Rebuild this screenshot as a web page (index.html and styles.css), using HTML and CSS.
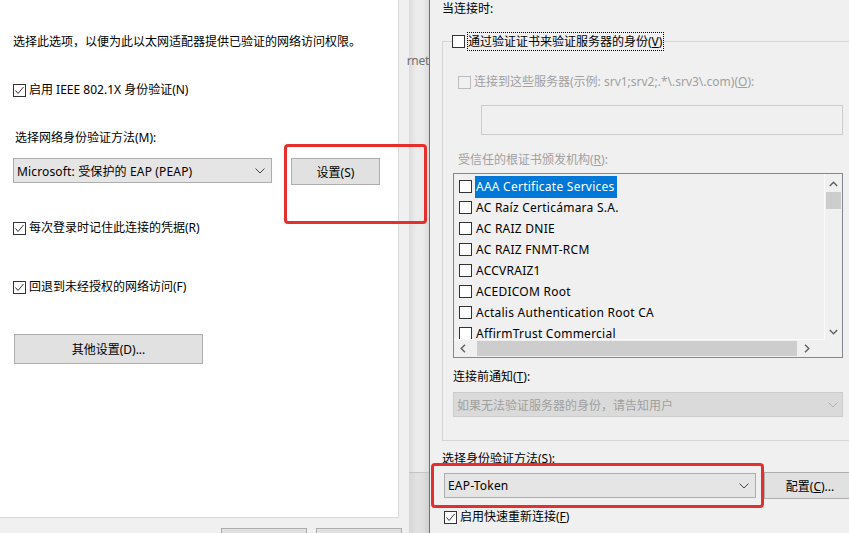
FILE: index.html
```html
<!DOCTYPE html>
<html lang="zh-CN">
<head>
<meta charset="utf-8">
<title>EAP</title>
<link rel="stylesheet" href="styles.css">
</head>
<body>
<div class="screen">
  <div class="left">
    <div class="sheet">
      <p class="intro">选择此选项，以便为此以太网适配器提供已验证的网络访问权限。</p>
      <div class="check-row r-ieee">
        <span class="cb checked"><svg viewBox="0 0 13 13" width="13" height="13"><path d="M2.5 6.5 L5 9.5 L10.5 3" fill="none" stroke="#333" stroke-width="1"/></svg></span>
        <span>启用 IEEE 802.1X 身份验证(N)</span>
      </div>
      <div class="label l-method">选择网络身份验证方法(M):</div>
      <div class="method-row">
        <div class="select sel-peap"><span>Microsoft: 受保护的 EAP (PEAP)</span>
          <svg class="chev" viewBox="0 0 10 6" width="10" height="6"><path d="M0.5 0.5 L5 5 L9.5 0.5" fill="none" stroke="#444" stroke-width="1"/></svg></div>
        <button class="btn btn-settings">设置(S)</button>
      </div>
      <div class="check-row r-remember">
        <span class="cb checked"><svg viewBox="0 0 13 13" width="13" height="13"><path d="M2.5 6.5 L5 9.5 L10.5 3" fill="none" stroke="#333" stroke-width="1"/></svg></span>
        <span>每次登录时记住此连接的凭据(R)</span>
      </div>
      <div class="check-row r-fallback">
        <span class="cb checked"><svg viewBox="0 0 13 13" width="13" height="13"><path d="M2.5 6.5 L5 9.5 L10.5 3" fill="none" stroke="#333" stroke-width="1"/></svg></span>
        <span>回退到未经授权的网络访问(F)</span>
      </div>
      <button class="btn btn-other">其他设置(D)...</button>
    </div>
    <div class="footer">
      <button class="btn btn-foot"></button>
      <button class="btn btn-foot"></button>
    </div>
  </div>

  <div class="strip">
    <div class="strip-top"><span class="tab-text">rnet</span></div>
    <div class="strip-bottom"></div>
  </div>
  <div class="divider"></div>

  <div class="right">
    <div class="heading">当连接时:</div>
    <fieldset class="group">
      <legend class="legend">
        <span class="cb"></span>
        <span class="focus-label">通过验证证书来验证服务器的身份(<u>V</u>)</span>
      </legend>
      <div class="check-row disabled r-servers">
        <span class="cb cb-dis"></span>
        <span>连接到这些服务器(示例: srv1;srv2;.*\.srv3\.com)(<u>O</u>):</span>
      </div>
      <div class="textbox"></div>
      <div class="label disabled l-trusted">受信任的根证书颁发机构(<u>R</u>):</div>
      <div class="listbox">
        <div class="list-items">
          <div class="item"><span class="cb"></span><span class="item-text selected">AAA Certificate Services</span></div>
          <div class="item"><span class="cb"></span><span class="item-text">AC Raíz Certicámara S.A.</span></div>
          <div class="item"><span class="cb"></span><span class="item-text">AC RAIZ DNIE</span></div>
          <div class="item"><span class="cb"></span><span class="item-text">AC RAIZ FNMT-RCM</span></div>
          <div class="item"><span class="cb"></span><span class="item-text">ACCVRAIZ1</span></div>
          <div class="item"><span class="cb"></span><span class="item-text">ACEDICOM Root</span></div>
          <div class="item"><span class="cb"></span><span class="item-text">Actalis Authentication Root CA</span></div>
          <div class="item"><span class="cb"></span><span class="item-text">AffirmTrust Commercial</span></div>
        </div>
        <div class="vscroll">
          <svg class="arrow" viewBox="0 0 9 6" width="9" height="6"><path d="M0.8 5 L4.5 1.2 L8.2 5" fill="none" stroke="#606060" stroke-width="1.4"/></svg>
          <div class="vthumb"></div>
          <div class="vspace"></div>
          <svg class="arrow" viewBox="0 0 9 6" width="9" height="6"><path d="M0.8 1 L4.5 4.8 L8.2 1" fill="none" stroke="#606060" stroke-width="1.4"/></svg>
        </div>
        <div class="hscroll">
          <svg class="arrow" viewBox="0 0 6 9" width="6" height="9"><path d="M5 0.8 L1.2 4.5 L5 8.2" fill="none" stroke="#606060" stroke-width="1.4"/></svg>
          <div class="hthumb"></div>
          <svg class="arrow" viewBox="0 0 6 9" width="6" height="9"><path d="M1 0.8 L4.8 4.5 L1 8.2" fill="none" stroke="#606060" stroke-width="1.4"/></svg>
        </div>
        <div class="corner"></div>
      </div>
      <div class="label l-notify">连接前通知(<u>T</u>):</div>
      <div class="select sel-dis"><span>如果无法验证服务器的身份，请告知用户</span>
        <svg class="chev" viewBox="0 0 10 6" width="10" height="6"><path d="M0.5 0.5 L5 5 L9.5 0.5" fill="none" stroke="#b0b0b0" stroke-width="1"/></svg></div>
    </fieldset>
    <div class="label l-auth">选择身份验证方法(S):</div>
    <div class="auth-row">
      <div class="select sel-token"><span>EAP-Token</span>
        <svg class="chev" viewBox="0 0 10 6" width="10" height="6"><path d="M0.5 0.5 L5 5 L9.5 0.5" fill="none" stroke="#444" stroke-width="1"/></svg></div>
      <button class="btn btn-config">配置(<u>C</u>)...</button>
    </div>
    <div class="check-row r-fast">
      <span class="cb checked"><svg viewBox="0 0 13 13" width="13" height="13"><path d="M2.5 6.5 L5 9.5 L10.5 3" fill="none" stroke="#333" stroke-width="1"/></svg></span>
      <span>启用快速重新连接(<u>F</u>)</span>
    </div>
  </div>

  <div class="highlight hl-settings"></div>
  <div class="highlight hl-auth"></div>
</div>
</body>
</html>
```

FILE: styles.css
```css
* { box-sizing: border-box; }
html, body { margin: 0; padding: 0; }
body {
  width: 849px;
  height: 533px;
  overflow: hidden;
  background: #f0f0f0;
  font-family: "Noto Sans", "Noto Sans CJK SC", sans-serif;
  font-size: 12px;
  color: #000;
}
u { text-decoration: underline; text-underline-offset: 1px; }
.screen {
  position: relative;
  display: flex;
  width: 849px;
  height: 533px;
  overflow: hidden;
}

/* ---------- left dialog ---------- */
.left {
  width: 409px;
  flex: none;
  display: flex;
  flex-direction: column;
  background: #f0f0f0;
}
.sheet {
  flex: none;
  width: 399px;
  height: 518px;
  background: #fff;
  border-right: 1px solid #d9d9d9;
  border-bottom: 1px solid #d9d9d9;
  padding-left: 13px;
  display: flex;
  flex-direction: column;
  align-items: flex-start;
}
.intro { margin: 34px 0 0; line-height: 16px; white-space: nowrap; }
.check-row {
  display: flex;
  align-items: center;
  height: 16px;
  line-height: 16px;
  white-space: nowrap;
}
.check-row .cb { margin-right: 3px; }
.label { line-height: 16px; height: 16px; white-space: nowrap; }
.r-ieee { margin-top: 32px; }
.l-method { margin-top: 32px; padding-left: 2px; }
.method-row { display: flex; align-items: flex-start; margin-top: 12px; }
.r-remember { margin-top: 35px; }
.r-fallback { margin-top: 43px; }

.cb {
  width: 13px;
  height: 13px;
  flex: none;
  border: 1px solid #333;
  background: #fff;
  display: inline-block;
  position: relative;
}
.cb svg { display: block; margin: -1px; }
.cb-dis { border-color: #bcbcbc; background: transparent; }

.select {
  display: flex;
  align-items: center;
  justify-content: space-between;
  height: 25px;
  background: #e5e5e5;
  border: 1px solid #adadad;
  padding: 0 6px 0 3px;
  white-space: nowrap;
}
.chev { display: block; flex: none; }
.sel-peap { width: 259px; letter-spacing: 0.15px; }

.btn {
  font: inherit;
  color: #000;
  background: #e1e1e1;
  border: 1px solid #adadad;
  border-radius: 0;
  padding: 0;
  margin: 0;
}
.btn-settings { width: 89px; height: 27px; margin-left: 19px; }
.btn-other { width: 189px; height: 30px; margin-top: 39px; margin-left: 1px; }

.footer {
  display: flex;
  gap: 9px;
  padding: 10px 0 0 221px;
}
.btn-foot { width: 86px; height: 24px; flex: none; }

/* ---------- strip between dialogs ---------- */
.strip {
  width: 20px;
  flex: none;
  display: flex;
  flex-direction: column;
}
.strip-top {
  height: 472px;
  background: linear-gradient(to right, #dcdcdc, #ececec 35%, #ebebeb 70%, #dadada);
  display: flex;
  justify-content: flex-end;
  padding-top: 53px;
}
.tab-text { color: #6f6f6f; white-space: nowrap; line-height: 16px; height: 16px; letter-spacing: -0.3px; }
.strip-bottom {
  flex: 1;
  border-top: 1px solid #c4c4c4;
  background: linear-gradient(to right, #d6d6d6, #e2e2e2 40%, #dedede 70%, #d0d0d0);
}
.divider { width: 1px; flex: none; background: #707070; }

/* ---------- right dialog ---------- */
.right {
  flex: 1;
  min-width: 0;
  padding-left: 12px;
  display: flex;
  flex-direction: column;
  align-items: flex-start;
}
.heading { margin-top: 1px; line-height: 16px; }
.group {
  margin: 15px 0 0;
  width: 430px;
  border: 1px solid #d5d5d5;
  padding: 0 0 23px 10px;
  min-width: 0;
}
.legend {
  padding: 0;
  display: flex;
  align-items: center;
  height: 19px;
}
.legend .cb { margin-right: 2px; margin-left: -1px; }
.focus-label {
  border: 1px dotted #000;
  line-height: 17px;
  height: 19px;
  padding: 0 1px 0 0;
  white-space: nowrap;
}
.disabled { color: #a0a0a0; }
.r-servers { margin-top: 23px; margin-left: 5px; }
.textbox {
  margin: 15px 0 0 28px;
  width: 362px;
  height: 30px;
  border: 1px solid #cccccc;
  background: #f0f0f0;
}
.l-trusted { margin-top: 17px; margin-left: 5px; }
.listbox {
  margin-top: 5px;
  width: 390px;
  height: 185px;
  border: 1px solid #828790;
  background: #f0f0f0;
  display: grid;
  grid-template-columns: 1fr 17px;
  grid-template-rows: 166px 17px;
}
.list-items {
  overflow: hidden;
  padding: 2px 0 0 5px;
  border-right: 1px solid #fafafa;
  border-bottom: 1px solid #fafafa;
}
.item {
  display: flex;
  align-items: center;
  height: 21px;
  white-space: nowrap;
}
.item .cb { margin-right: 3px; }
.item-text { padding: 0 2px 0 1px; line-height: 22px; height: 22px; letter-spacing: 0.25px; }
.item-text.selected { background: #0078d7; color: #fff; }
.vscroll {
  display: flex;
  flex-direction: column;
  align-items: center;
  padding-top: 7px;
  padding-bottom: 5px;
}
.vthumb { width: 15px; height: 17px; background: #cdcdcd; margin-top: 5px; }
.vspace { flex: 1; }
.arrow { display: block; flex: none; }
.hscroll {
  display: flex;
  align-items: center;
  padding-left: 6px;
  padding-right: 6px;
}
.hthumb { width: 320px; height: 15px; background: #cdcdcd; margin: 0 7px 0 11px; }
.corner { background: #f0f0f0; }

.l-notify { margin-top: 11px; }
.sel-dis {
  margin-top: 7px;
  width: 390px;
  background: #dadada;
  border-color: #cccccc;
  color: #a0a0a0;
  padding-right: 4px;
}
.l-auth { margin-top: 10px; }
.auth-row { display: flex; align-items: flex-start; margin-top: 6px; margin-left: 2px; }
.sel-token { width: 312px; letter-spacing: 0.2px; }
.btn-config { width: 92px; height: 27px; margin-left: 8px; margin-top: -1px; flex: none; }
.r-fast { margin-top: 10px; margin-left: 2px; }

/* red highlight annotations */
.highlight {
  position: absolute;
  border: 3px solid #e3302c;
  border-radius: 4px;
}
.hl-settings { left: 284px; top: 144px; width: 143px; height: 80px; }
.hl-auth { left: 431px; top: 463px; width: 333px; height: 45px; }
```
